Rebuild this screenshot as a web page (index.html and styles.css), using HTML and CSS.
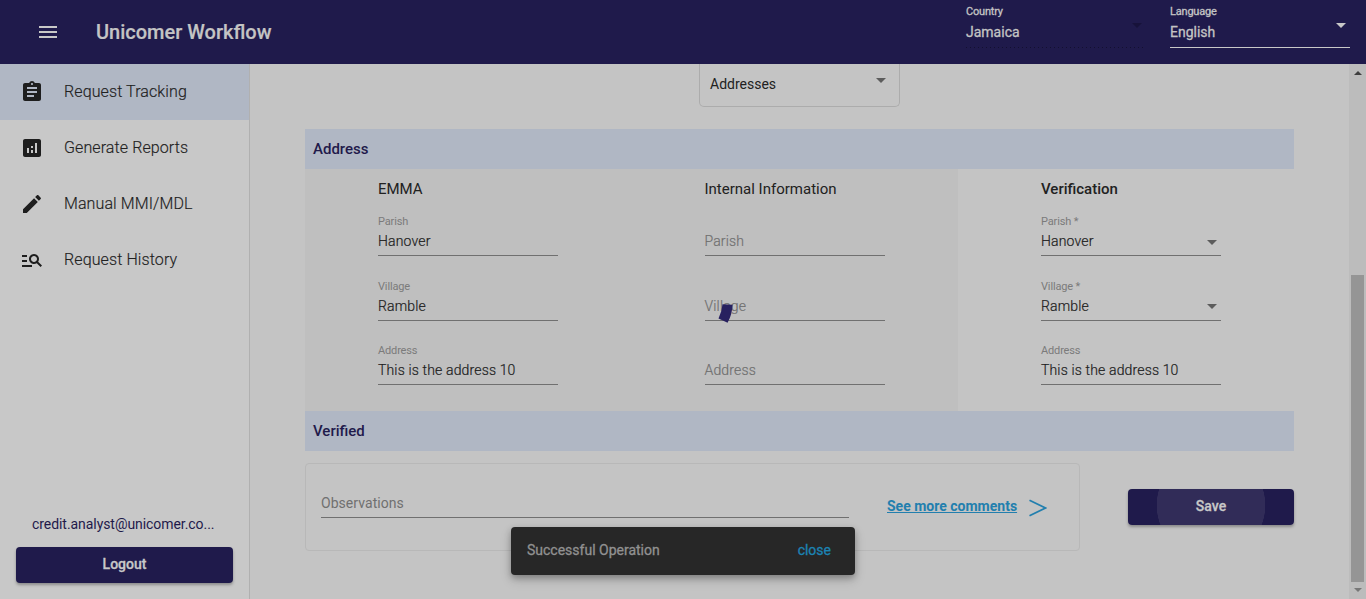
FILE: index.html
```
<!DOCTYPE html>
<html lang="en">
<head>
<meta charset="utf-8">
<title>Unicomer Workflow</title>
<link rel="stylesheet" href="styles.css">
</head>
<body>
<header class="topbar">
  <svg class="menu" viewBox="0 0 24 24"><path d="M3 18h18v-2H3v2zm0-5h18v-2H3v2zm0-7v2h18V6H3z"/></svg>
  <h1 class="brand">Unicomer Workflow</h1>
  <div class="top-select disabled"><span class="top-label">Country</span><div class="top-value"><span>Jamaica</span><i class="caret"></i></div></div>
  <div class="top-select"><span class="top-label">Language</span><div class="top-value"><span>English</span><i class="caret"></i></div></div>
</header>
<div class="body">
  <aside class="sidebar">
    <nav>
      <a class="nav-item active"><svg viewBox="0 0 24 24"><path d="M19 3h-4.18C14.4 1.84 13.3 1 12 1c-1.3 0-2.4.84-2.82 2H5c-1.1 0-2 .9-2 2v14c0 1.1.9 2 2 2h14c1.1 0 2-.9 2-2V5c0-1.1-.9-2-2-2zm-7 0c.55 0 1 .45 1 1s-.45 1-1 1-1-.45-1-1 .45-1 1-1zm2 14H7v-2h7v2zm3-4H7v-2h10v2zm0-4H7V7h10v2z"/></svg><span>Request Tracking</span></a>
      <a class="nav-item"><svg viewBox="0 0 24 24"><path d="M19 3H5c-1.1 0-2 .9-2 2v14c0 1.1.9 2 2 2h14c1.1 0 2-.9 2-2V5c0-1.1-.9-2-2-2zM9 17H7v-5h2v5zm4 0h-2v-3h2v3zm0-5h-2v-2h2v2zm4 5h-2V7h2v10z"/></svg><span>Generate Reports</span></a>
      <a class="nav-item"><svg viewBox="0 0 24 24"><path d="M3 17.25V21h3.75L17.81 9.94l-3.75-3.75L3 17.25zM20.71 7.04c.39-.39.39-1.02 0-1.41l-2.34-2.34c-.39-.39-1.02-.39-1.41 0l-1.83 1.83 3.75 3.75 1.83-1.83z"/></svg><span>Manual MMI/MDL</span></a>
      <a class="nav-item"><svg viewBox="0 0 24 24"><path d="M7 9H2V7h5v2zm0 3H2v2h5v-2zm13.59 7l-3.83-3.83c-.8.52-1.74.83-2.76.83-2.76 0-5-2.24-5-5s2.24-5 5-5 5 2.24 5 5c0 1.02-.31 1.96-.83 2.75L22 17.59 20.59 19zM17 11c0-1.65-1.35-3-3-3s-3 1.35-3 3 1.35 3 3 3 3-1.35 3-3zM2 19h10v-2H2v2z"/></svg><span>Request History</span></a>
    </nav>
    <div class="account">
      <div class="email">credit.analyst@unicomer.co...</div>
      <button class="btn logout">Logout</button>
    </div>
  </aside>
  <main class="content">
    <div class="type-select"><span>Addresses</span><i class="caret"></i></div>
    <h2 class="section-bar">Address</h2>
    <div class="columns">
      <section class="column shaded">
        <h3>EMMA</h3>
        <div class="field"><label>Parish</label><div class="value">Hanover</div></div>
        <div class="field"><label>Village</label><div class="value">Ramble</div></div>
        <div class="field"><label>Address</label><div class="value">This is the address 10</div></div>
      </section>
      <section class="column shaded">
        <h3>Internal Information</h3>
        <div class="field"><label></label><div class="value empty">Parish</div></div>
        <div class="field"><label></label><div class="value empty">Village</div></div>
        <div class="field"><label></label><div class="value empty">Address</div></div>
      </section>
      <section class="column verification">
        <h3>Verification</h3>
        <div class="field"><label>Parish *</label><div class="value">Hanover<i class="caret"></i></div></div>
        <div class="field"><label>Village *</label><div class="value">Ramble<i class="caret"></i></div></div>
        <div class="field"><label>Address</label><div class="value">This is the address 10</div></div>
      </section>
    </div>
    <h2 class="section-bar">Verified</h2>
    <div class="footer-row">
      <div class="comments">
        <div class="observations">Observations</div>
        <a class="more">See more comments</a>
        <svg class="chevron" viewBox="0 0 18 18"><path d="M.5 1.2 16.5 9 .5 16.8"/></svg>
      </div>
      <button class="btn save"><span>Save</span></button>
    </div>
  </main>
  <div class="scrollbar"><i class="arrow up"></i><div class="thumb"></div><i class="arrow down"></i></div>
</div>
<svg class="spinner" viewBox="0 0 20 24"><path d="M5.5 3.2 15.5 3.8Q15.4 13 10.6 21.8L1.5 17.4Q5 10.5 5.5 3.2z"/></svg>
<div class="snackbar"><span>Successful Operation</span><a>close</a></div>
</body>
</html>
```
FILE: styles.css
```
* { box-sizing: border-box; }
body {
  margin: 0; height: 599px; overflow: hidden; display: flex; flex-direction: column;
  background: #c4c4c4; color: #212121;
  font: 400 14px/20px Roboto, sans-serif;
}
h1, h2, h3 { margin: 0; }
.caret { width: 0; height: 0; border: 5px solid transparent; border-top-color: #5c5c5c; border-bottom: 0; }
.topbar { flex: 0 0 64px; display: flex; background: #1f1a4b; color: #c4c4c4; padding-right: 16px; }
.menu { width: 24px; height: 24px; margin: 20px 0 0 36px; fill: #c8c8c8; }
.brand { flex: 1; margin-left: 36px; font-size: 20px; font-weight: 500; line-height: 64px; -webkit-text-stroke: .2px; }
.top-select { width: 180px; height: 48px; margin-left: 24px; border-bottom: 1px solid #c8c8c8; padding-top: 5px; }
.top-label { display: block; font-size: 11px; line-height: 14px; letter-spacing: -.2px; -webkit-text-stroke: .3px; }
.top-value { display: flex; justify-content: space-between; padding: 3px 4px 0 0; font-size: 14px; line-height: 20px; -webkit-text-stroke: .3px; }
.top-value .caret { margin-top: 1px; border-top-color: #c8c8c8; }
.disabled { border-bottom: 0; background: repeating-linear-gradient(90deg, #131030 0 1px, transparent 1px 4px) 0 100% / 100% 1px no-repeat; }
.disabled .caret { border-top-color: #17123a; }
.body { flex: 1; min-height: 0; display: flex; }
.sidebar { width: 250px; flex: none; display: flex; flex-direction: column; justify-content: space-between; background: #c8c8c8; border-right: 1px solid #b0b0b0; }
.nav-item { display: flex; align-items: center; gap: 20px; height: 56px; padding-left: 20px; font-size: 16px; font-weight: 300; letter-spacing: .1px; -webkit-text-stroke: .15px; }
.nav-item svg { width: 24px; height: 24px; fill: #1e1e1e; }
.active { background: #b0b7c4; }
.account { padding: 0 16px 16px; }
.email { padding: 0 0 13px 16px; color: #1f1a4b; white-space: nowrap; letter-spacing: -.06px; }
.btn { border: 0; border-radius: 4px; height: 36px; background: #1f1a4b; color: #c8c8c8; font: 500 14px/35px Roboto, sans-serif; padding: 0 0 1px; box-shadow: 0 2px 3px rgba(0,0,0,.3); -webkit-text-stroke: .3px; }
.logout { width: 100%; display: block; }
.content { flex: 1; padding: 0 55px; }
.type-select { width: 201px; height: 43px; margin: 0 0 22px 394px; padding: 10px 13px 0 10px; border: 1px solid #acacac; border-top: 0; border-radius: 0 0 5px 5px; display: flex; justify-content: space-between; }
.type-select .caret { margin-top: 4px; }
.section-bar { height: 40px; background: #b0b7c4; color: #1f1a4b; padding-left: 8px; font-size: 15px; font-weight: 500; line-height: 40px; letter-spacing: 0; }
.columns { display: grid; grid-template-columns: 326.5px 326.5px 336px; height: 242px; }
.column { padding: 0 73px; }
.column.verification { padding: 0 73px 0 83px; }
.shaded { background: #bfbfbf; }
.column h3 { font-size: 15px; font-weight: 400; line-height: 20px; padding: 10px 0 15px; white-space: nowrap; }
.column.verification h3 { font-weight: 500; }
.field { height: 65px; width: 180px; }
.field:nth-of-type(2) { height: 64px; }
.field label { display: block; height: 15px; font-size: 11px; line-height: 15px; letter-spacing: -.15px; color: #7b7b7b; }
.value { display: flex; justify-content: space-between; height: 27px; line-height: 24px; padding: 0 4px 0 0; border-bottom: 1px solid #707070; font-weight: 300; letter-spacing: .15px; -webkit-text-stroke: .2px; }
.value .caret { margin-top: 11px; }
.field:nth-of-type(2) .caret { margin-top: 10px; }
.empty { color: #707070; }
.footer-row { display: flex; justify-content: space-between; padding-top: 12px; }
.comments { width: 775px; height: 88px; display: flex; border: 1px solid #b8b8b8; border-radius: 4px; padding-left: 15px; }
.observations { width: 528px; height: 54px; padding-top: 29px; border-bottom: 1px solid #707070; color: #707070; letter-spacing: .05px; }
.more { margin: 32px 0 0 38px; width: 130px; color: #227fae; font-weight: 700; text-decoration: underline; white-space: nowrap; }
.chevron { width: 18px; height: 18px; margin: 35px 0 0 12px; fill: none; stroke: #227fae; stroke-width: 1.8; }
.save { width: 166px; margin-top: 26px; height: 36px; align-self: flex-start; background: radial-gradient(circle at 50% 45%, #312c58 54px, #1f1a4b 54.5px); }
.scrollbar { width: 17px; background: #bcbcbc; display: flex; flex-direction: column; align-items: center; }
.arrow { width: 0; height: 0; border: 4px solid transparent; }
.up { margin-top: 7px; border-top: 0; border-bottom-color: #3f3f3f; }
.thumb { width: 13px; height: 307px; margin-top: 200px; background: #959595; }
.down { margin-top: 6px; border-bottom: 0; border-top-color: #777; }
.spinner { position: absolute; left: 717px; top: 301px; width: 20px; height: 24px; fill: #28215f; }
.snackbar { position: absolute; left: 511px; top: 527px; width: 344px; height: 48px; padding: 0 24px 2px 16px; display: flex; align-items: center; justify-content: space-between; border-radius: 4px; background: #272727; color: #919191; box-shadow: 0 3px 6px rgba(0,0,0,.25), 0 5px 12px rgba(0,0,0,.15); -webkit-text-stroke: .3px; }
.snackbar a { color: #1c84b4; }
```
